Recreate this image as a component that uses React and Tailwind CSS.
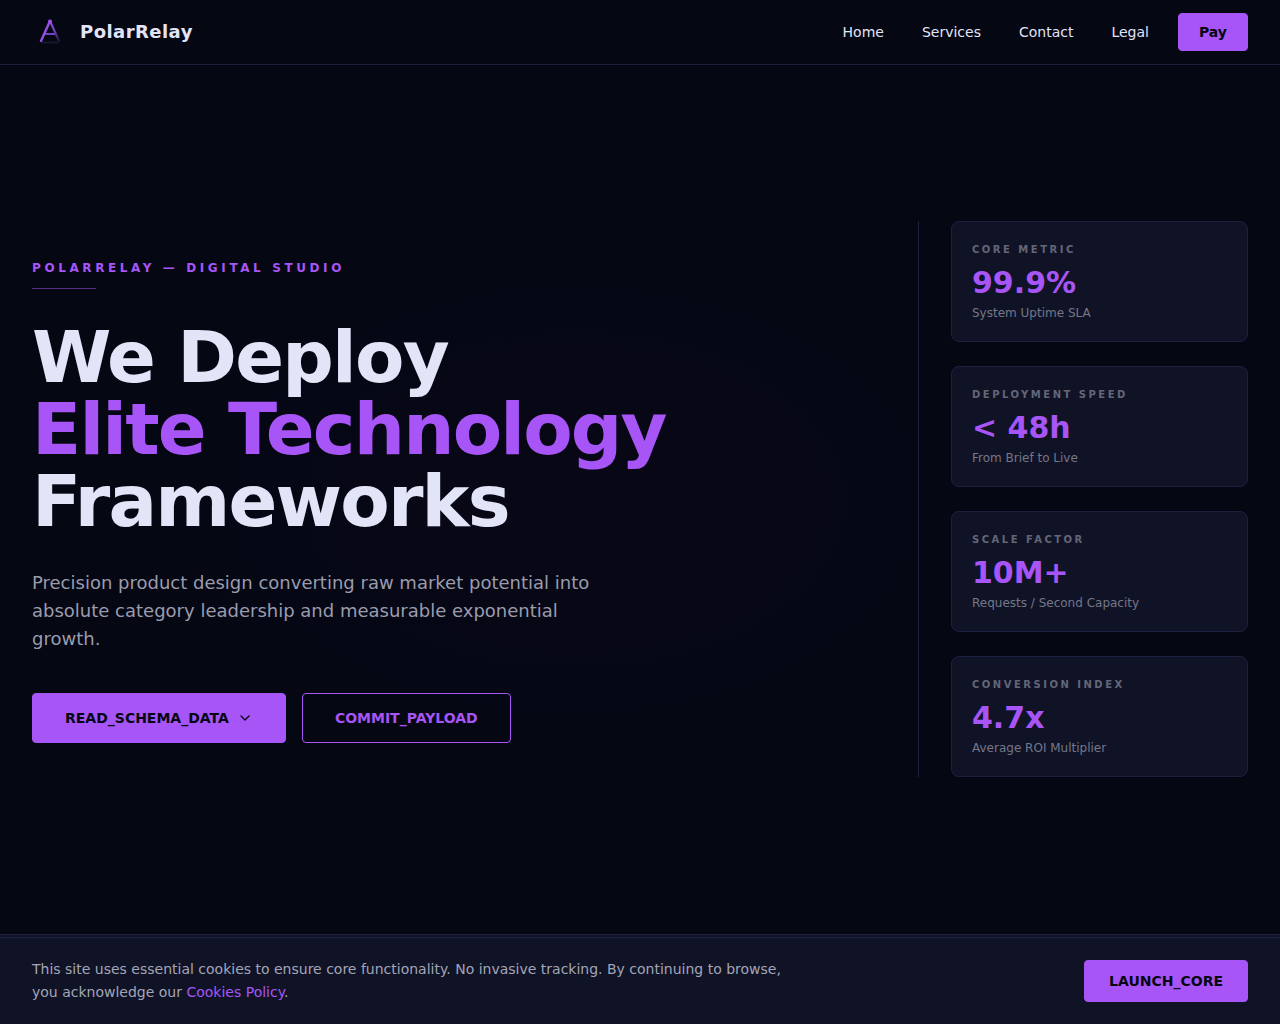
import React, { useState } from "react";
import { ChevronDown } from "lucide-react";

const links = ["Home", "Services", "Contact", "Legal"];

const metrics = [
  { label: "CORE METRIC", value: "99.9%", note: "System Uptime SLA" },
  { label: "DEPLOYMENT SPEED", value: "< 48h", note: "From Brief to Live" },
  { label: "SCALE FACTOR", value: "10M+", note: "Requests / Second Capacity" },
  { label: "CONVERSION INDEX", value: "4.7x", note: "Average ROI Multiplier" },
];

const Logo = () => (
  <svg width="36" height="36" viewBox="0 0 36 36" fill="none" aria-hidden="true">
    <defs>
      <linearGradient id="leg" x1="18" y1="7" x2="27" y2="27" gradientUnits="userSpaceOnUse">
        <stop stopColor="#9a4fe8" />
        <stop offset="0.6" stopColor="#5a3a9c" />
        <stop offset="1" stopColor="#171936" />
      </linearGradient>
      <linearGradient id="base" x1="9" y1="0" x2="28" y2="0" gradientUnits="userSpaceOnUse">
        <stop stopColor="#1d1638" />
        <stop offset="1" stopColor="#10162a" />
      </linearGradient>
    </defs>
    <path d="M10 28.5 H27" stroke="url(#base)" strokeWidth="2" />
    <path d="M18 7 L27 27" stroke="url(#leg)" strokeWidth="2.2" strokeLinecap="round" />
    <path d="M13 20 H23" stroke="#7440c4" strokeWidth="2" />
    <path d="M9 27 L18 7" stroke="#9350e2" strokeWidth="2.4" strokeLinecap="round" />
    <circle cx="18" cy="7.5" r="2" fill="#a050ee" />
  </svg>
);

const MetricCard = ({ label, value, note }) => (
  <div className="rounded-lg border border-[#1e2040] bg-[#101326] p-5">
    <p className="text-[10px] leading-4 font-bold tracking-[0.25em] text-[#646678]">{label}</p>
    <p className="mt-[7px] text-3xl leading-9 font-bold text-[#a855f7]">{value}</p>
    <p className="mt-1 text-xs text-[#757789]">{note}</p>
  </div>
);

const App = () => {
  const [accepted, setAccepted] = useState(false);

  return (
    <div className="min-h-screen bg-[#050713] font-['DejaVu_Sans',sans-serif] text-[#e2e4f8]">
      <header className="border-b border-[#1e2040]">
        <div className="flex h-16 items-center justify-between px-8">
          <a href="#home" className="flex items-center gap-3">
            <Logo />
            <span className="text-lg font-bold tracking-wide">PolarRelay</span>
          </a>
          <nav className="flex items-center gap-5 text-sm">
            {links.map((link) => (
              <a key={link} href={`#${link.toLowerCase()}`} className="px-[9px]">
                {link}
              </a>
            ))}
            <button className="rounded border border-[#a855f7] bg-[#a855f7] px-5 py-2 font-bold text-[#050713]">
              Pay
            </button>
          </nav>
        </div>
      </header>

      <main>
        <section className="grid min-h-[calc(100vh-155px)] grid-cols-[1fr_330px] items-center bg-[radial-gradient(ellipse_at_45%_50%,#080717_0%,#050713_45%)] px-8 pb-px">
          <div>
            <p className="text-xs leading-6 font-bold tracking-[0.3em] text-[#a855f7]">
              POLARRELAY — DIGITAL STUDIO
            </p>
            <div className="mt-2 h-px w-16 bg-[#562d84]" />
            <h1 className="mt-8 text-7xl leading-none font-bold tracking-tight">
              We Deploy
              <br />
              <span className="text-[#a855f7]">Elite Technology</span>
              <br />
              Frameworks
            </h1>
            <p className="mt-8 max-w-[576px] text-lg leading-7 text-[#9a9cad]">
              Precision product design converting raw market potential into
              absolute category leadership and measurable exponential growth.
            </p>
            <div className="mt-10 flex gap-4 text-sm font-bold">
              <button className="flex h-[50px] items-center gap-2 rounded border border-[#a855f7] bg-[#a855f7] px-8 text-[#050713]">
                READ_SCHEMA_DATA
                <ChevronDown size={16} />
              </button>
              <button className="h-[50px] rounded border border-[#a855f7] px-8 text-[#a855f7]">
                COMMIT_PAYLOAD
              </button>
            </div>
          </div>

          <div className="flex flex-col gap-6 border-l border-[#1e2040] pl-8">
            {metrics.map((metric) => (
              <MetricCard key={metric.label} {...metric} />
            ))}
          </div>
        </section>
        <section className="h-22 border-t border-[#1e2040] bg-[#101326]" />
      </main>

      {!accepted && (
        <div className="fixed inset-x-0 bottom-0 flex items-center justify-between border-t border-[#1e2040] bg-[#101326] px-8 py-5">
          <p className="max-w-3xl text-sm leading-[23px] text-[#a3a5b7]">
            This site uses essential cookies to ensure core functionality. No
            invasive tracking. By continuing to browse, you acknowledge our{" "}
            <a href="#cookies" className="text-[#a855f7]">
              Cookies Policy
            </a>
            .
          </p>
          <button
            className="rounded border border-[#a855f7] bg-[#a855f7] px-6 py-[10px] text-sm font-bold text-[#050713]"
            onClick={() => setAccepted(true)}
          >
            LAUNCH_CORE
          </button>
        </div>
      )}
    </div>
  );
};

export default App;
